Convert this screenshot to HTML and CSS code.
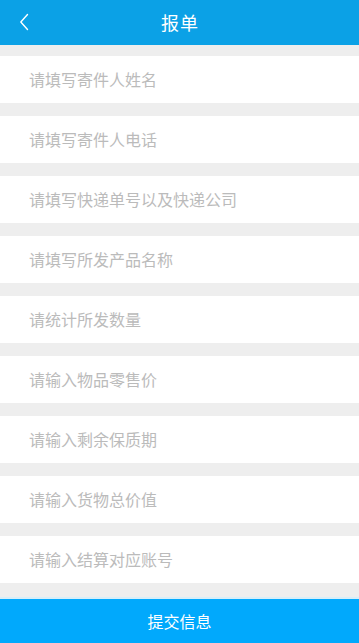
FILE: index.html
```html
<!DOCTYPE html>
<html lang="zh-CN">
<head>
<meta charset="utf-8">
<title>报单</title>
<link rel="stylesheet" href="styles.css">
</head>
<body>
<div class="page">
  <header class="topbar">
    <span class="back">
      <svg width="10" height="18" viewBox="0 0 10 18"><path d="M8.5 1.5 L1.8 9 L8.5 16.5" fill="none" stroke="#fff" stroke-width="1.4" stroke-linecap="round" stroke-linejoin="round"/></svg>
    </span>
    <h1 class="title">报单</h1>
  </header>
  <main class="form">
    <div class="row">请填写寄件人姓名</div>
    <div class="row">请填写寄件人电话</div>
    <div class="row">请填写快递单号以及快递公司</div>
    <div class="row">请填写所发产品名称</div>
    <div class="row">请统计所发数量</div>
    <div class="row">请输入物品零售价</div>
    <div class="row">请输入剩余保质期</div>
    <div class="row">请输入货物总价值</div>
    <div class="row">请输入结算对应账号</div>
  </main>
  <button class="submit">提交信息</button>
</div>
</body>
</html>
```
FILE: styles.css
```css
html, body {
  margin: 0;
  padding: 0;
  background: #eeeeee;
}
body {
  font-family: "Noto Sans CJK SC", "Noto Sans", sans-serif;
}
.page {
  display: flex;
  flex-direction: column;
  height: 643px;
  width: 359px;
  overflow: hidden;
}
.topbar {
  height: 45px;
  background: #0ba1e6;
  display: flex;
  align-items: center;
  justify-content: center;
  position: relative;
  flex: none;
}
.back {
  position: absolute;
  left: 19px;
  top: 13px;
  width: 10px;
  height: 18px;
  display: block;
}
.back svg { display: block; }
.title {
  margin: 0;
  color: #ffffff;
  font-size: 18px;
  font-weight: normal;
  letter-spacing: 1px;
  line-height: 45px;
  padding-left: 1px;
}
.form {
  flex: 1;
  display: flex;
  flex-direction: column;
  gap: 13px;
  padding-top: 11px;
}
.row {
  height: 47px;
  background: #ffffff;
  color: #bbbbbb;
  font-size: 16px;
  line-height: 47px;
  padding-left: 29px;
  flex: none;
}
.submit {
  flex: none;
  height: 46px;
  border: 0;
  border-top: 2px solid #d6eef9;
  background: #01a9fc;
  color: #ffffff;
  font-family: "Noto Sans CJK SC", "Noto Sans", sans-serif;
  font-size: 16px;
  padding: 0;
  width: 100%;
}
```
